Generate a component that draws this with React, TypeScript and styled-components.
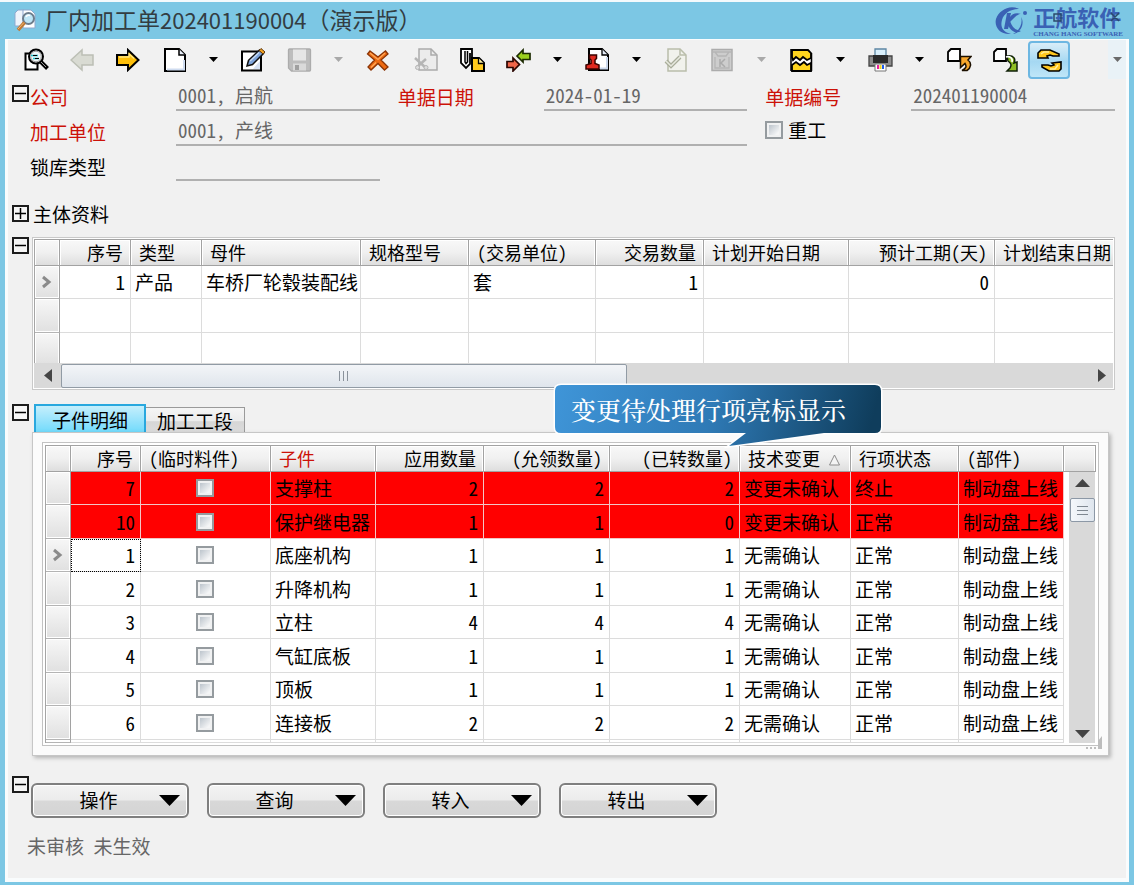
import React from 'react';
import styled, { createGlobalStyle, css } from 'styled-components';

const GlobalStyle = createGlobalStyle`
  *, *::before, *::after { box-sizing: border-box; }
  body {
    margin: 0;
    background: #7cc7e4;
    color: #000;
    font-family: "Noto Sans CJK SC", sans-serif;
    font-size: 19px;
    line-height: 24px;
    font-feature-settings: "hwid";
  }
  button, input { font: inherit; color: inherit; font-feature-settings: inherit; }
`;

/* ---------- window frame ---------- */

const Window = styled.div`
  display: flex;
  flex-direction: column;
  min-height: 100vh;
  background: #7cc7e4;
  border-top: 2px solid #f4fafc;
  padding: 0 5px 3px;
`;

const TitleBar = styled.header`
  display: flex;
  align-items: center;
  height: 37px;
  padding-left: 9px;
  padding-right: 6px;
`;

const Title = styled.h1`
  flex: 1;
  margin: 0 0 0 8px;
  padding-bottom: 3px;
  font-size: 23px;
  line-height: 32px;
  font-weight: 400;
  font-feature-settings: normal;
  color: #333d42;
  white-space: nowrap;
`;

const TitleNumber = styled.span`
  font-size: 22px;
`;

const Brand = styled.div`
  display: flex;
  align-items: center;
  gap: 5px;
  color: #3a61b4;
`;

const BrandText = styled.div`
  position: relative;
  display: flex;
  flex-direction: column;
  gap: 2px;
`;

const BrandName = styled.strong`
  font-size: 22px;
  line-height: 24px;
  white-space: nowrap;
`;

const BrandSub = styled.span`
  font: 700 7px/8px "Liberation Serif", serif;
  white-space: nowrap;
`;

const WindowControls = styled.svg`
  position: absolute;
  left: 18px;
  top: 6px;
`;

const Client = styled.main`
  flex: 1;
  background: #f1f1f1;
  border: solid #f9fcfd;
  border-width: 1px 3px 4px;
  padding-bottom: 18px;
`;

/* ---------- toolbar ---------- */

const Toolbar = styled.nav`
  display: flex;
  align-items: center;
  height: 41px;
  padding: 0 0 2px 5px;
`;

const ToolButton = styled.button<{ $active?: boolean; $gap?: boolean }>`
  display: flex;
  align-items: center;
  justify-content: center;
  flex: none;
  width: ${p => (p.$active ? 42 : 46)}px;
  height: 38px;
  margin: 0 ${p => (p.$active ? 2 : 0)}px 0 ${p => (p.$gap ? 2 : 0)}px;
  padding: 0;
  border: ${p => (p.$active ? '2px solid #6db7e2' : '0')};
  border-radius: 4px;
  background: ${p => (p.$active ? 'linear-gradient(#d9edf8, #a5d8f2 55%, #bfe6f8)' : 'none')};
`;

const DropButton = styled.button`
  display: flex;
  align-items: center;
  justify-content: center;
  flex: none;
  width: 33px;
  height: 38px;
  padding: 0;
  border: 0;
  background: none;
`;

const Overflow = styled.button`
  display: flex;
  align-items: center;
  justify-content: center;
  width: 18px;
  height: 39px;
  margin-left: auto;
  padding: 0;
  border: 0;
  background: #e9f2f7;
`;

/* ---------- sections ---------- */

const Body = styled.div`
  padding: 0 11px 0 4px;
`;

const Section = styled.section<{ $top?: number; $indent?: number }>`
  position: relative;
  display: grid;
  grid-template-columns: ${p => p.$indent ?? 20}px minmax(0, 1fr);
  align-items: start;
  margin-top: ${p => p.$top ?? 0}px;
`;

const Toggle = styled.button<{ $top?: number }>`
  display: flex;
  align-items: center;
  justify-content: center;
  width: 17px;
  height: 17px;
  margin-top: ${p => p.$top ?? 0}px;
  padding: 0;
  border: 2px solid #1c1c1c;
  background: #f6f6f6;
`;

const SectionTitle = styled.h2`
  margin: 0;
  padding-left: 1px;
  font-size: 19px;
  line-height: 18px;
  font-weight: 400;
`;

const FormGrid = styled.div`
  display: grid;
  grid-template-columns: repeat(3, minmax(0, 1fr));
  grid-template-rows: 30px 35px 35px;
  column-gap: 18px;
  align-items: end;
`;

const Field = styled.div<{ $span?: number }>`
  grid-column: span ${p => p.$span ?? 1};
  display: grid;
  grid-template-columns: 146px minmax(0, 1fr);
  align-items: end;
`;

const FieldLabel = styled.label<{ $required?: boolean }>`
  line-height: 28px;
  color: ${p => (p.$required ? '#cc1208' : '#000')};
  white-space: nowrap;
`;

const FieldInput = styled.input`
  width: 100%;
  height: 30px;
  padding: 0 0 2px 2px;
  border: 0;
  border-bottom: 2px solid #b0b0b0;
  background: none;
  color: #666;
`;

const CheckField = styled.label`
  display: flex;
  align-items: center;
  gap: 5px;
  height: 32px;
`;

const CheckBox = styled.input`
  appearance: none;
  display: block;
  width: 18px;
  height: 18px;
  margin: 0;
  border: 2px solid #959b9f;
  background: linear-gradient(135deg, #bcc4cc, #f4f5f6 85%) content-box, #f0f1f2;
  padding: 2px;
`;

const CheckCellBox = styled(CheckBox)`
  margin: 0 auto;
`;

/* ---------- grids ---------- */

const ProductPanel = styled.div`
  border: 1px solid #c9c9c9;
  padding: 1px;
  background: #fff;
`;

const TableClip = styled.div<{ $height?: number }>`
  flex: 1;
  min-width: 0;
  overflow: hidden;
  height: ${p => (p.$height ? p.$height + 'px' : 'auto')};
`;

const Table = styled.table`
  width: 100%;
  table-layout: fixed;
  border-collapse: separate;
  border-spacing: 0;
  border-left: 1px solid #a5a5a5;
`;

const headerSurface = css`
  border: solid #a2a2a2;
  border-width: 1px 1px 1px 0;
  background: linear-gradient(#f8f8f8, #f0f0f0 50%, #dedede);
  box-shadow: inset 1px 1px 0 #fff, inset -1px 0 0 #fff;
`;

type Align = 'left' | 'right' | 'center';

const HeadCell = styled.th<{ $align?: Align; $required?: boolean }>`
  ${headerSurface}
  height: 27px;
  padding: 0 7px 1px 8px;
  font-size: 18px;
  line-height: 24px;
  font-weight: 400;
  text-align: ${p => p.$align ?? 'left'};
  color: ${p => (p.$required ? '#cc1208' : '#000')};
  white-space: nowrap;
  overflow: hidden;
`;

const Row = styled.tr<{ $alert?: boolean }>`
  height: 33px;
  background: ${p => (p.$alert ? '#ff0000' : '#fff')};
  &:nth-child(even) { height: 34px; }
`;

const TailRow = styled.tr<{ $height: number }>`
  height: ${p => p.$height}px;
  background: #fff;
`;

const Cell = styled.td<{ $align?: Align; $focus?: boolean; $alert?: boolean }>`
  padding: 0 5px 0 4px;
  border-right: 1px solid #dcdcdc;
  border-bottom: 1px solid #dcdcdc;
  line-height: 24px;
  text-align: ${p => p.$align ?? 'left'};
  white-space: nowrap;
  overflow: hidden;
  ${p => p.$alert && css`border-color: #f3c6c6;`}
  ${p => p.$focus && css`outline: 1px dotted #000; outline-offset: -1px;`}
`;

const RowHead = styled.td`
  padding: 0;
  border-right: 1px solid #a2a2a2;
  border-bottom: 1px solid #b4b4b4;
  background: linear-gradient(#f7f7f7, #e0e0e0);
  box-shadow: inset 1px 1px 0 #fff, inset -1px -1px 0 #fff;
`;

const Marker = styled.svg`
  display: block;
  margin: 0 auto;
`;

const HScroll = styled.div`
  display: grid;
  grid-template-columns: 27px minmax(0, 1fr) 23px;
  align-items: center;
  justify-items: center;
  height: 25px;
  background: #d9d9d9;
`;

const HTrack = styled.div`
  width: 100%;
`;

const HThumb = styled.div`
  display: flex;
  align-items: center;
  justify-content: center;
  width: 55%;
  height: 24px;
  border: 1px solid #919ba5;
  border-radius: 2px;
  background: linear-gradient(#f3f5f8, #dfe5ec);
`;

const Tabs = styled.div`
  display: flex;
  align-items: flex-end;
  padding-left: 2px;
`;

const Tab = styled.button<{ $active?: boolean }>`
  height: ${p => (p.$active ? 29 : 26)}px;
  padding: 0 ${p => (p.$active ? 16 : 11)}px;
  border: ${p => (p.$active ? '2px solid #29a8de' : '1px solid #9a9a9a')};
  border-bottom: 0;
  border-left-width: ${p => (p.$active ? 2 : 0)}px;
  background: ${p =>
    p.$active
      ? 'linear-gradient(#c5effc, #9fe5fc 45%, #6fdafc)'
      : 'linear-gradient(#f5f5f5, #ececec 50%, #d6d6d6 55%, #dcdcdc)'};
  line-height: 22px;
  white-space: nowrap;
`;

const TabPanel = styled.div`
  margin: -1px 6px 0 0;
  padding: 9px;
  border: 1px solid #c6c6c6;
  background: #fbfbfb;
  box-shadow: 2px 2px 4px rgba(0, 0, 0, 0.25);
  position: relative;
`;

const DetailBox = styled.div`
  display: flex;
  border: 1px solid #c2c2c2;
  padding: 2px;
  background: #fff;
`;

const ScrollSide = styled.div`
  display: flex;
  flex-direction: column;
  width: 32px;
`;

const ScrollCap = styled.div`
  ${headerSurface}
  height: 27px;
`;

const VTrack = styled.div`
  display: flex;
  flex-direction: column;
  align-items: center;
  flex: 1;
  margin: 0 1px 0 5px;
  padding: 7px 0 5px;
  background: #d9d9d9;
`;

const VThumb = styled.div`
  display: flex;
  align-items: center;
  justify-content: center;
  width: 25px;
  height: 24px;
  margin: 11px 0 auto;
  border: 1px solid #8c98a6;
  border-radius: 2px;
  background: linear-gradient(90deg, #f5f8fb, #dfe6ee);
`;

const Grip = styled.svg`
  position: absolute;
  right: 5px;
  bottom: 5px;
`;

const Callout = styled.div`
  position: absolute;
  left: 540px;
  top: -21px;
  width: 332px;
  height: 66px;
  padding: 8px 0 0 19px;
  color: #fff;
  font-size: 25px;
  line-height: 36px;
  font-weight: 500;
  white-space: nowrap;
`;

const CalloutShape = styled.svg`
  position: absolute;
  left: 0;
  top: 0;
`;

const CalloutText = styled.span`
  position: relative;
  font-family: "Noto Serif CJK SC", "Noto Sans CJK SC", serif;
`;

/* ---------- footer ---------- */

const Actions = styled.div`
  display: flex;
  flex-wrap: wrap;
  gap: 18px;
  padding-top: 7px;
`;

const ActionButton = styled.button`
  display: grid;
  grid-template-columns: 1fr 28px;
  align-items: center;
  width: 158px;
  height: 35px;
  padding: 0 0 1px 5px;
  border: 2px solid #7f7f7f;
  border-radius: 6px;
  background: linear-gradient(#f3f3f3, #ececec 48%, #d8d8d8 52%, #d4d4d4);
  box-shadow: inset 0 0 0 1px #fff;
  line-height: 24px;
`;

const Status = styled.p`
  margin: 17px 0 0;
  padding-left: 15px;
  line-height: 22px;
  color: #666;
`;

/* ---------- drawings ---------- */

const Caret = ({ muted = false }: { muted?: boolean }) => (
  <svg width="9" height="5" viewBox="0 0 9 5" aria-hidden="true">
    <path d="M0 0h9L4.500 5z" fill={muted ? '#a9a9a9' : '#000'} />
  </svg>
);

const Arrow = ({ d, w, h, fill = '#444' }: { d: string; w: number; h: number; fill?: string }) => (
  <svg width={w} height={h} viewBox={`0 0 ${w} ${h}`} aria-hidden="true">
    <path d={d} fill={fill} />
  </svg>
);

const RowMarker = () => (
  <Marker width="12" height="14" viewBox="0 0 12 14" aria-hidden="true">
    <path d="M2 2l6 5-6 5" fill="none" stroke="#8a8a8a" strokeWidth="3" />
  </Marker>
);

const glyphs: Record<string, React.ReactNode> = {
  preview: (
    <>
      <path d="M1.500 5.500h12v16h-12z" fill="#fff" stroke="#000" strokeWidth="2" />
      <circle cx="12" cy="8.500" r="7" fill="#f2f6f6" stroke="#000" strokeWidth="2" />
      <circle cx="12" cy="8.500" r="5.300" fill="none" stroke="#9a9a9a" />
      <path d="M7 7.500h7M9 10.500h6" stroke="#19c6d0" strokeWidth="1.700" />
      <path d="M9 7.500h4M11 10.500h4" stroke="#000" strokeWidth="1" />
      <path d="M16.500 13.500l7 7" stroke="#000" strokeWidth="4" />
      <path d="M17 14l5 5" stroke="#999" strokeWidth="1" />
    </>
  ),
  back: <path d="M1 12L12 2v5h11v10H12v5z" fill="#d9dbd3" stroke="#bcbfb5" strokeWidth="1.500" />,
  forward: (
    <>
      <path d="M1 7h11V2l10.500 10L12 22v-5H1z" fill="#fdbf0b" stroke="#000" strokeWidth="2" />
      <path d="M3 9h10V6l5 4.500" fill="none" stroke="#ffe680" strokeWidth="1.500" />
    </>
  ),
  page: (
    <>
      <path d="M3 1h14l6 6v16H3z" fill="#fff" stroke="#000" strokeWidth="2" />
      <path d="M5 21.500h17V12" fill="none" stroke="#cfdcf0" strokeWidth="2" />
      <path d="M17 1v6h6" fill="#e8eef8" stroke="#000" strokeWidth="1.500" />
    </>
  ),
  edit: (
    <>
      <path d="M1 3.500h19v19H1z" fill="#fff" stroke="#000" strokeWidth="2" />
      <path d="M12 21h7v-8z" fill="#d7e2f3" />
      <path d="M6 18l1.500-5.500L18.500 2l4 3.500L11.500 16.500z" fill="#7ea4da" stroke="#111" strokeWidth="1.500" />
      <path d="M9 13L18 4.500" stroke="#c7dbf5" strokeWidth="1.500" />
      <path d="M18 2.500l2-2 4 3.500-2 2z" fill="#f4a321" stroke="#5b3208" strokeWidth="1" />
    </>
  ),
  save: (
    <>
      <path d="M2.500 1h20q1 0 1 1v20q0 1-1 1h-18l-3-3V2q0-1 1-1z" fill="#bdbdbd" stroke="#acacac" strokeWidth="1.300" />
      <path d="M6 1.500h13v11H6z" fill="#e6e6e6" />
      <path d="M6 15.500h13v7H6z" fill="#dadada" />
      <path d="M8 17h4v5H8z" fill="#a0a0a0" />
    </>
  ),
  remove: (
    <>
      <path d="M4 3l8 6 7.500-6 2.500 3-7 6 7 7-3.500 3L12 15.500 5 22l-3-3 6.500-7L1.500 6z" fill="#ee6a12" stroke="#8a3406" strokeWidth="1.300" />
      <path d="M4 5l8 6.500L19 5M5 19.500l5-5" fill="none" stroke="#ffa95a" strokeWidth="1.200" />
    </>
  ),
  cut: (
    <>
      <path d="M5 1h12l6 6v15H5z" fill="#ececec" stroke="#ababab" strokeWidth="1.500" />
      <path d="M17 1v6h6" fill="none" stroke="#ababab" strokeWidth="1.500" />
      <path d="M1 10l11 10M12 11L3 19" stroke="#b5b5b5" strokeWidth="2.500" />
      <circle cx="3.500" cy="19.500" r="2" fill="#ddd" stroke="#b5b5b5" />
      <circle cx="12" cy="19.500" r="2" fill="#ddd" stroke="#b5b5b5" />
    </>
  ),
  attach: (
    <>
      <path d="M12 9V1H1v14l5 5 4-4V5" fill="#fff" stroke="#000" strokeWidth="1.800" />
      <path d="M5 3v11l1 1.500 1.500-1.500V3" fill="none" stroke="#000" strokeWidth="1.500" />
      <path d="M12 10h7l5 5v8H12z" fill="#ffc91c" stroke="#000" strokeWidth="2" />
      <path d="M18.500 10v5.500H24" fill="#fff1a6" stroke="#000" strokeWidth="1.300" />
    </>
  ),
  transfer: (
    <>
      <path d="M11 8l6-6v3.500h7v6h-7V14z" fill="#9bd01e" stroke="#1c2b00" strokeWidth="1.700" />
      <path d="M1 13.500h6V10l6.500 6.500L7 23v-3.500H1z" fill="#f0664a" stroke="#2a0500" strokeWidth="1.700" />
    </>
  ),
  stamp: (
    <>
      <path d="M4 1h13l6 6v15H4z" fill="#fff" stroke="#000" strokeWidth="2" />
      <path d="M17 1v6h6" fill="#e3eaf5" stroke="#000" strokeWidth="1.300" />
      <path d="M15 20.500h7V9" fill="none" stroke="#cbd8ec" strokeWidth="2" />
      <path d="M4.500 7h7v3.500L10 12v3.500l4 1.500v4H1v-4l5-1.500V12l-1.500-1.500z" fill="#e02a20" stroke="#3a0300" strokeWidth="1.500" />
    </>
  ),
  approve: (
    <>
      <path d="M4 1h12l6 6v16H4z" fill="#f1f2ec" stroke="#b9bdaa" strokeWidth="1.500" />
      <path d="M16 1v6h6" fill="none" stroke="#b9bdaa" strokeWidth="1.500" />
      <path d="M2 13l5 5 9-9" fill="none" stroke="#a9ad9a" strokeWidth="4" />
      <path d="M2 13l5 5 9-9" fill="none" stroke="#e7e9df" strokeWidth="1.500" />
    </>
  ),
  archive: (
    <>
      <path d="M2 1.500h20v21H2z" fill="#cdcdcd" stroke="#acacac" strokeWidth="1.500" />
      <path d="M3 4h18M5 4l3 4h8l3-4M5 9v11h14V9" fill="none" stroke="#b5b5b5" strokeWidth="1.300" />
      <path d="M10 11v8M15 11l-4 4 4 4" stroke="#ababab" strokeWidth="1.500" fill="none" />
    </>
  ),
  image: (
    <>
      <path d="M2 1h17l4 4v18H2z" fill="#fff" />
      <path d="M3 9V2h16l3 3v5l-4 2-4-3-3 3-4-3-3 3z" fill="#ffd51e" stroke="#000" strokeWidth="1.800" />
      <path d="M3 17l4-3 4 3 4-3 3 3 4-2v8H3z" fill="#ffd51e" stroke="#000" strokeWidth="1.800" />
      <path d="M2 1v22M22.500 5v18" stroke="#000" strokeWidth="1.500" />
    </>
  ),
  print: (
    <>
      <path d="M7 1h11v8H7z" fill="#d9effb" stroke="#5d87a4" strokeWidth="1.300" />
      <path d="M1 8h23v10H1z" fill="#8d8d8d" stroke="#444" strokeWidth="1.300" />
      <path d="M5 7h15v8H5z" fill="#2b2b2b" />
      <path d="M7 16h11v7H7z" fill="#fff" stroke="#777" />
      <path d="M9 17h2v4H9z" fill="#e81ca4" />
      <path d="M11.500 17h2v4h-2z" fill="#f2d21e" />
      <path d="M14 17h2v4h-2z" fill="#1d5cee" />
    </>
  ),
  pull: (
    <>
      <path d="M1 4l3-3h9v12H1z" fill="#fff" stroke="#000" strokeWidth="1.800" />
      <path d="M13.500 8.500H24l-3 3.500c4 3 3 8-1 10.500h-5c4-2 5-4 3-7l-4.500 4z" fill="#f8a72c" stroke="#1c1000" strokeWidth="1.500" />
    </>
  ),
  push: (
    <>
      <path d="M1 4l3-3h9v12H1z" fill="#fff" stroke="#000" strokeWidth="1.800" />
      <path d="M14 8c7-1 9 3 7 7l3-1v9H14l3-3c2-3 1-5-2-7z" fill="#8fbe22" stroke="#10200a" strokeWidth="1.500" />
      <path d="M13 9c4-1 7 1 6 5" fill="none" stroke="#fff" strokeWidth="1.700" />
    </>
  ),
  refresh: (
    <>
      <path d="M1 10V5l3-3h9l9 4v2h-6l-3-1-3 1 1 2z" fill="#ffc71f" stroke="#000" strokeWidth="1.600" />
      <path d="M24 14v7l-2 2H12l-7-4v-2h6l3 1 3-1-2-2z" fill="#ffc71f" stroke="#000" strokeWidth="1.600" />
      <path d="M4 6l3-2h5M21 17l-3 4h-5" fill="none" stroke="#ffef9c" strokeWidth="1.500" />
    </>
  ),
};

const Glyph = ({ name }: { name: string }) => (
  <svg width="25" height="24" viewBox="0 0 25 24" aria-hidden="true">
    {glyphs[name]}
  </svg>
);

const TitleIcon = () => (
  <svg width="23" height="23" viewBox="0 0 23 23" aria-hidden="true">
    <path d="M4 1h6l3 3v13H1V4z" fill="#eef4fb" stroke="#8fa9cf" />
    <path d="M9 1h8l4 4v14H9z" fill="#fff" stroke="#8fa9cf" />
    <circle cx="14.500" cy="9.500" r="5.500" fill="#bfe6f6" stroke="#6d7d8c" strokeWidth="2" />
    <path d="M12 8c1-2 3-2 4-1.500" stroke="#fff" strokeWidth="1.500" fill="none" />
    <path d="M10.500 13.500L4 21" stroke="#c07a34" strokeWidth="3.500" />
    <path d="M10 13.500L4 20" stroke="#f0b878" strokeWidth="1" />
  </svg>
);

const BrandMark = () => (
  <svg width="33" height="30" viewBox="0 0 33 30" aria-hidden="true">
    <path d="M24 3C15-2 4 4 1 13c-2 8 4 16 15 15-8-2-11-7-9-14C9 7 16 3 24 3z" fill="#3a61b4" />
    <path d="M12 7l-3 16h4l2-7 4-4c3-3 5-4 7-4-5-2-9 0-11 3l1-4z" fill="#3a61b4" />
    <path d="M15 15c2 6 5 9 11 10-4 3-10 1-13-6z" fill="#3a61b4" />
    <path d="M26 11c2 6-1 13-8 17 8-1 12-11 8-17z" fill="#3a61b4" />
    <circle cx="30" cy="7" r="2" fill="#3a61b4" />
  </svg>
);

const SectionToggle = ({ open = true, label, top }: { open?: boolean; label: string; top?: number }) => (
  <Toggle type="button" aria-label={label} aria-expanded={open} $top={top}>
    <svg width="11" height="11" viewBox="0 0 11 11" aria-hidden="true">
      <path d={open ? 'M0 5h11v1H0z' : 'M0 5h11v1H0zM5 0h1v11H5z'} fill="#000" stroke="#000" strokeWidth=".5" />
    </svg>
  </Toggle>
);

/* ---------- data ---------- */

type Tool = { icon: string; label: string; drop?: boolean; muted?: boolean; active?: boolean; gap?: boolean };

const tools: Tool[] = [
  { icon: 'preview', label: '浏览' },
  { icon: 'back', label: '上一笔' },
  { icon: 'forward', label: '下一笔' },
  { icon: 'page', label: '新增', drop: true },
  { icon: 'edit', label: '修改' },
  { icon: 'save', label: '保存', drop: true, muted: true },
  { icon: 'remove', label: '删除' },
  { icon: 'cut', label: '作废', gap: true },
  { icon: 'attach', label: '附件' },
  { icon: 'transfer', label: '转单', drop: true },
  { icon: 'stamp', label: '审核', drop: true },
  { icon: 'approve', label: '生效' },
  { icon: 'archive', label: '结案', drop: true, muted: true },
  { icon: 'image', label: '图表', drop: true },
  { icon: 'print', label: '打印', drop: true },
  { icon: 'pull', label: '转入' },
  { icon: 'push', label: '转出' },
  { icon: 'refresh', label: '刷新', active: true },
];

type Column = { title: string; width?: number; align?: Align; required?: boolean; sorted?: boolean };

const productColumns: Column[] = [
  { title: '序号', width: 71, align: 'right' },
  { title: '类型', width: 71 },
  { title: '母件', width: 159 },
  { title: '规格型号', width: 108 },
  { title: '(交易单位)', width: 127 },
  { title: '交易数量', width: 108, align: 'right' },
  { title: '计划开始日期', width: 145 },
  { title: '预计工期(天)', width: 146, align: 'right' },
  { title: '计划结束日期', width: 145 },
];
const productRow = ['1', '产品', '车桥厂轮毂装配线', '', '套', '1', '', '0', ''];

const partColumns: Column[] = [
  { title: '序号', width: 70, align: 'right' },
  { title: '(临时料件)', width: 130, align: 'center' },
  { title: '子件', required: true },
  { title: '应用数量', width: 108, align: 'right' },
  { title: '(允领数量)', width: 126, align: 'right' },
  { title: '(已转数量)', width: 130, align: 'right' },
  { title: '技术变更', width: 111, sorted: true },
  { title: '行项状态', width: 108 },
  { title: '(部件)', width: 105 },
];

type Part = { no: string; name: string; qty: [string, string, string]; change: string; state: string; alert?: boolean; current?: boolean };

const part = (no: string, name: string, n: string, more: Partial<Part> = {}): Part => ({
  no, name, qty: [n, n, n], change: '无需确认', state: '正常', ...more,
});

const parts: Part[] = [
  part('7', '支撑柱', '2', { change: '变更未确认', state: '终止', alert: true }),
  part('10', '保护继电器', '1', { qty: ['1', '1', '0'], change: '变更未确认', alert: true }),
  part('1', '底座机构', '1', { current: true }),
  part('2', '升降机构', '1'),
  part('3', '立柱', '4'),
  part('4', '气缸底板', '1'),
  part('5', '顶板', '1'),
  part('6', '连接板', '2'),
];

const HeadRow = ({ columns }: { columns: Column[] }) => (
  <>
    <colgroup>
      <col style={{ width: 25 }} />
      {columns.map(c => <col key={c.title} style={c.width ? { width: c.width } : undefined} />)}
    </colgroup>
    <thead>
      <tr>
        <HeadCell />
        {columns.map(c => (
          <HeadCell key={c.title} scope="col" $align={c.align === 'center' ? 'left' : c.align} $required={c.required}>
            {c.title}
            {c.sorted && (
              <svg width="20" height="12" viewBox="0 0 20 12" aria-hidden="true">
                <path d="M9.500 11L14.500 1l5 10z" fill="#f4f4f4" stroke="#8c8c8c" />
              </svg>
            )}
          </HeadCell>
        ))}
      </tr>
    </thead>
  </>
);

const ProductGrid = () => (
  <ProductPanel>
    <TableClip $height={124}>
      <Table>
        <HeadRow columns={productColumns} />
        <tbody>
          <Row>
            <RowHead><RowMarker /></RowHead>
            {productRow.map((v, i) => <Cell key={i} $align={productColumns[i].align}>{v}</Cell>)}
          </Row>
          {[0, 1].map(r => (
            <Row key={r}>
              <RowHead />
              {productColumns.map(c => <Cell key={c.title} />)}
            </Row>
          ))}
        </tbody>
      </Table>
    </TableClip>
    <HScroll>
      <Arrow d="M8 0v13L0 6.500z" w={8} h={13} />
      <HTrack>
        <HThumb><Arrow d="M0 0h1v10H0zM4 0h1v10H4zM8 0h1v10H8z" w={9} h={10} fill="#8a929b" /></HThumb>
      </HTrack>
      <Arrow d="M0 0v13l8-6.500z" w={8} h={13} />
    </HScroll>
  </ProductPanel>
);

const PartGrid = () => (
  <DetailBox>
    <TableClip>
      <Table>
        <HeadRow columns={partColumns} />
        <tbody>
          {parts.map(p => (
            <Row key={p.no} $alert={p.alert}>
              <RowHead>{p.current && <RowMarker />}</RowHead>
              <Cell $align="right" $alert={p.alert} $focus={p.current}>{p.no}</Cell>
              <Cell $alert={p.alert}><CheckCellBox type="checkbox" aria-label={`临时料件 ${p.no}`} /></Cell>
              <Cell $alert={p.alert}>{p.name}</Cell>
              {p.qty.map((q, i) => <Cell key={i} $align="right" $alert={p.alert}>{q}</Cell>)}
              <Cell $alert={p.alert}>{p.change}</Cell>
              <Cell $alert={p.alert}>{p.state}</Cell>
              <Cell $alert={p.alert}>制动盘上线</Cell>
            </Row>
          ))}
          <TailRow $height={3}>
            <RowHead />
            {partColumns.map(c => <Cell key={c.title} />)}
          </TailRow>
        </tbody>
      </Table>
    </TableClip>
    <ScrollSide>
      <ScrollCap />
      <VTrack>
        <Arrow d="M7.500 0L15 8H0z" w={15} h={8} />
        <VThumb><Arrow d="M0 0h11v1H0zM0 4h11v1H0zM0 8h11v1H0z" w={11} h={9} fill="#7f8891" /></VThumb>
        <Arrow d="M0 0h15L7.500 8z" w={15} h={8} />
      </VTrack>
    </ScrollSide>
  </DetailBox>
);

export default function App() {
  return (
    <>
      <GlobalStyle />
      <Window>
        <TitleBar>
          <TitleIcon />
          <Title>厂内加工单<TitleNumber>202401190004</TitleNumber>（演示版）</Title>
          <Brand>
            <BrandMark />
            <BrandText>
              <WindowControls width="72" height="14" viewBox="0 0 72 14" aria-hidden="true">
                <path d="M3 4h7v7H3zM60 3l8 8M68 3l-8 8" fill="none" stroke="#2b4a6c" strokeWidth="1.500" />
              </WindowControls>
              <BrandName>正航软件</BrandName>
              <BrandSub>CHANG HANG SOFTWARE</BrandSub>
            </BrandText>
          </Brand>
        </TitleBar>
        <Client>
          <Toolbar aria-label="工具栏">
            {tools.map(t => (
              <React.Fragment key={t.icon}>
                <ToolButton type="button" aria-label={t.label} $active={t.active} $gap={t.gap}>
                  <Glyph name={t.icon} />
                </ToolButton>
                {t.drop && (
                  <DropButton type="button" aria-label={`${t.label}选项`}><Caret muted={t.muted} /></DropButton>
                )}
              </React.Fragment>
            ))}
            <Overflow type="button" aria-label="更多"><Arrow d="M0 0h9L4.500 5z" w={9} h={5} fill="#6a6a6a" /></Overflow>
          </Toolbar>
          <Body>
            <Section $indent={18}>
              <SectionToggle label="折叠表头" top={4} />
              <FormGrid>
                <Field>
                  <FieldLabel htmlFor="company" $required>公司</FieldLabel>
                  <FieldInput id="company" defaultValue="0001, 启航" />
                </Field>
                <Field>
                  <FieldLabel htmlFor="date" $required>单据日期</FieldLabel>
                  <FieldInput id="date" defaultValue="2024-01-19" />
                </Field>
                <Field>
                  <FieldLabel htmlFor="number" $required>单据编号</FieldLabel>
                  <FieldInput id="number" defaultValue="202401190004" />
                </Field>
                <Field $span={2}>
                  <FieldLabel htmlFor="unit" $required>加工单位</FieldLabel>
                  <FieldInput id="unit" defaultValue="0001, 产线" />
                </Field>
                <CheckField><CheckBox type="checkbox" />重工</CheckField>
                <Field>
                  <FieldLabel htmlFor="lock">锁库类型</FieldLabel>
                  <FieldInput id="lock" />
                </Field>
              </FormGrid>
            </Section>

            <Section $top={24}>
              <SectionToggle label="展开主体资料" open={false} />
              <SectionTitle>主体资料</SectionTitle>
            </Section>

            <Section $top={14}>
              <SectionToggle label="折叠产品" />
              <ProductGrid />
            </Section>

            <Section $top={14}>
              <SectionToggle label="折叠明细" />
              <div>
                <Tabs role="tablist">
                  <Tab type="button" role="tab" aria-selected="true" $active>子件明细</Tab>
                  <Tab type="button" role="tab" aria-selected="false">加工工段</Tab>
                </Tabs>
                <TabPanel role="tabpanel">
                  <PartGrid />
                  <Grip width="18" height="14" viewBox="0 0 18 14" aria-hidden="true">
                    <path d="M1 11h2v2H1zM5 11h2v2H5zM9 11h2v2H9zM13 13V5l4-5v13z" fill="#bdbdbd" />
                  </Grip>
                </TabPanel>
              </div>
              <Callout role="note">
                <CalloutShape width="332" height="66" viewBox="0 0 332 66" aria-hidden="true">
                  <defs>
                    <linearGradient id="bubble" x1="0" y1="0" x2="1" y2="0.05">
                      <stop offset="0" stopColor="#3f95d8" />
                      <stop offset=".5" stopColor="#2f7ab6" />
                      <stop offset="1" stopColor="#0f3d5c" />
                    </linearGradient>
                  </defs>
                  <path
                    d="M9 2h314q6 0 6 6v36q0 6-6 6h-51L177 63l17-13H9q-6 0-6-6V8q0-6 6-6z"
                    fill="url(#bubble)"
                    stroke="#fff"
                    strokeWidth="3"
                    paintOrder="stroke"
                  />
                </CalloutShape>
                <CalloutText>变更待处理行项亮标显示</CalloutText>
              </Callout>
            </Section>

            <Section $top={20} $indent={19}>
              <SectionToggle label="折叠操作区" />
              <Actions>
                {['操作', '查询', '转入', '转出'].map(t => (
                  <ActionButton key={t} type="button" aria-haspopup="menu">
                    <span>{t}</span>
                    <Arrow d="M0 0h21L10.500 11z" w={21} h={11} fill="#000" />
                  </ActionButton>
                ))}
              </Actions>
            </Section>
            <Status>未审核 未生效</Status>
          </Body>
        </Client>
      </Window>
    </>
  );
}
